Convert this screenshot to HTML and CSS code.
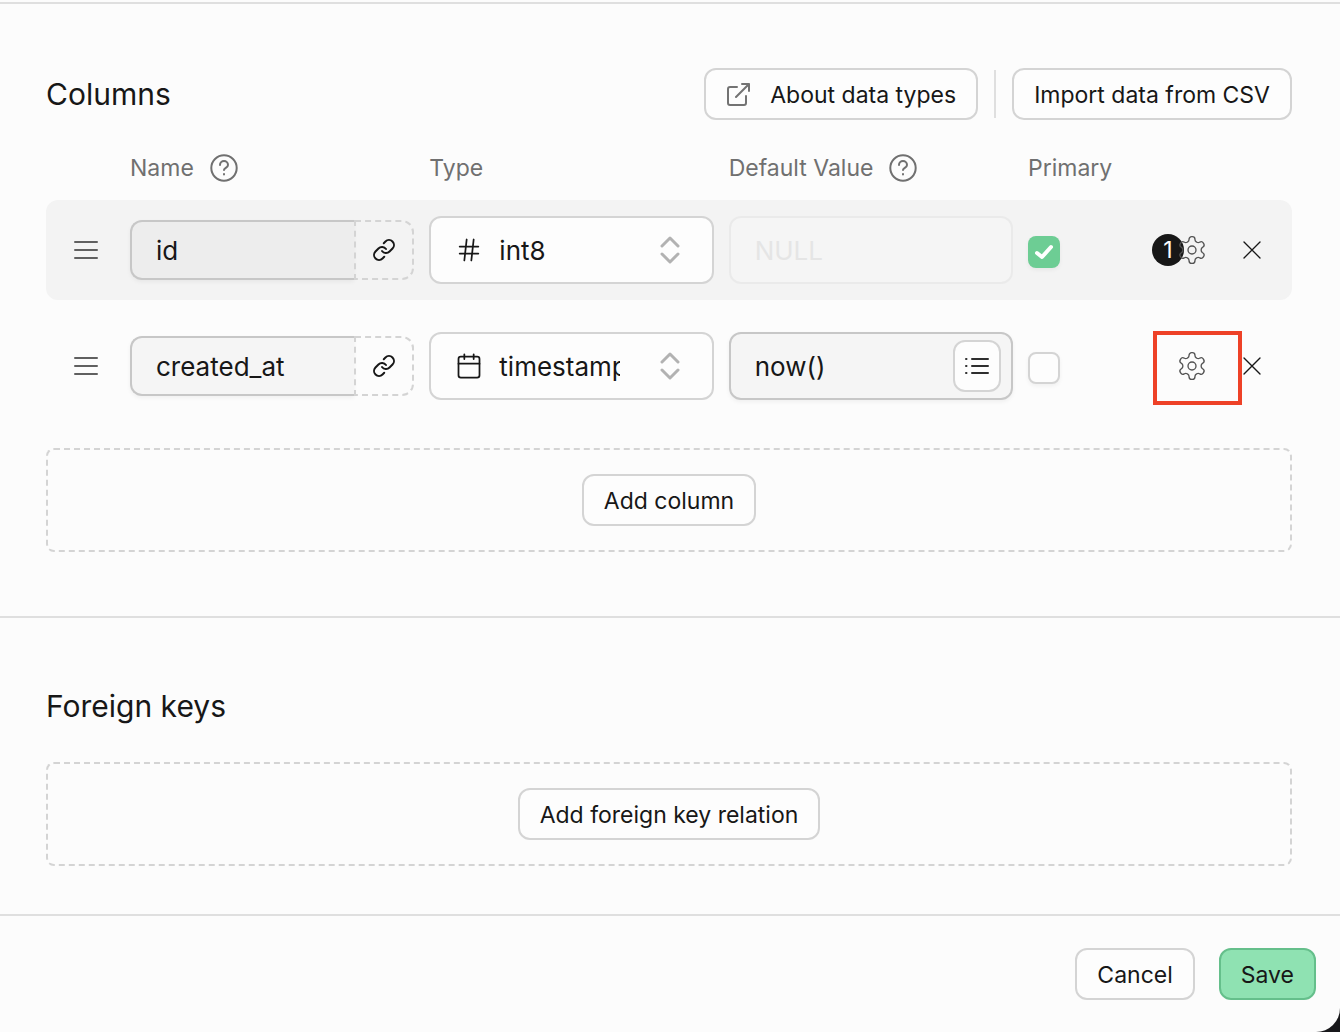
FILE: index.html
```html
<!DOCTYPE html>
<html lang="en">
<head>
    <meta charset="UTF-8">
    <meta name="viewport" content="width=device-width, initial-scale=1.0">
    <title>Table editor</title>
    <link rel="stylesheet" href="styles.css">
</head>
<body>
    <!-- shared icons -->
    <svg class="sprite" aria-hidden="true">
        <symbol id="menu" viewBox="0 0 24 24">
            <path d="M1 4h22M1 12h22M1 20h22"/>
        </symbol>
        <symbol id="help" viewBox="0 0 28 28">
            <circle cx="14" cy="14" r="12.7"/>
            <path d="M10 11a4 4 0 0 1 8 0c0 2.600-4 3-4 5M14 20v.4"/>
        </symbol>
        <symbol id="link" viewBox="0 0 24 24">
            <path d="M10 13a5 5 0 0 0 7.54.54l3-3a5 5 0 0 0-7.07-7.07l-1.72 1.71"/>
            <path d="M14 11a5 5 0 0 0-7.54-.54l-3 3a5 5 0 0 0 7.07 7.07l1.71-1.71"/>
        </symbol>
        <symbol id="chevrons" viewBox="0 0 20 28">
            <path d="M2 10l8-8 8 8M2 18l8 8 8-8"/>
        </symbol>
        <symbol id="gear" viewBox="0 0 24 24">
            <path d="M12.22 2h-.44a2 2 0 0 0-2 2v.18a2 2 0 0 1-1 1.73l-.43.25a2 2 0 0 1-2 0l-.15-.08a2 2 0 0 0-2.73.73l-.22.38a2 2 0 0 0 .73 2.73l.15.1a2 2 0 0 1 1 1.72v.51a2 2 0 0 1-1 1.74l-.15.09a2 2 0 0 0-.73 2.73l.22.38a2 2 0 0 0 2.73.73l.15-.08a2 2 0 0 1 2 0l.43.25a2 2 0 0 1 1 1.73V20a2 2 0 0 0 2 2h.44a2 2 0 0 0 2-2v-.18a2 2 0 0 1 1-1.73l.43-.25a2 2 0 0 1 2 0l.15.08a2 2 0 0 0 2.73-.73l.22-.39a2 2 0 0 0-.73-2.73l-.15-.08a2 2 0 0 1-1-1.74v-.5a2 2 0 0 1 1-1.74l.15-.09a2 2 0 0 0 .73-2.73l-.22-.38a2 2 0 0 0-2.73-.73l-.15.08a2 2 0 0 1-2 0l-.43-.25a2 2 0 0 1-1-1.73V4a2 2 0 0 0-2-2z"/>
            <circle cx="12" cy="12" r="3"/>
        </symbol>
        <symbol id="close" viewBox="0 0 24 24">
            <path d="M18 6L6 18M6 6l12 12"/>
        </symbol>
    </svg>

    <div class="panel">
        <section class="section">
            <div class="section-head">
                <h2>Columns</h2>
                <div class="actions">
                    <a class="btn btn-icon" href="#types">
                        <svg class="icon-ext" viewBox="0 0 24 24"><path d="M11 4H4a2 2 0 0 0-2 2v14a2 2 0 0 0 2 2h14a2 2 0 0 0 2-2v-7M16 1h7v7M23 1L10 14"/></svg>
                        About data types
                    </a>
                    <div class="divider"></div>
                    <button class="btn" type="button">Import data from CSV</button>
                </div>
            </div>

            <div class="grid labels">
                <span></span>
                <span class="label">Name <svg class="icon-help"><use href="#help"/></svg></span>
                <span class="label">Type</span>
                <span class="label">Default Value <svg class="icon-help"><use href="#help"/></svg></span>
                <span class="label">Primary</span>
            </div>

            <div class="grid row row-key">
                <svg class="icon-menu"><use href="#menu"/></svg>
                <div class="name">
                    <input type="text" value="id" aria-label="Column name">
                    <button class="link" type="button" aria-label="Add foreign key"><svg><use href="#link"/></svg></button>
                </div>
                <div class="type">
                    <svg class="icon-type" viewBox="0 0 24 24"><path d="M4 9h16M4 15h16M10 3L8 21M16 3l-2 18"/></svg>
                    <select aria-label="Column type"><option>int8</option></select>
                    <svg class="icon-chevrons"><use href="#chevrons"/></svg>
                </div>
                <div class="default">
                    <input type="text" placeholder="NULL" aria-label="Default value" disabled>
                </div>
                <input class="check" type="checkbox" aria-label="Primary" checked>
                <div class="settings">
                    <span class="badge">1</span>
                    <button class="icon-btn gear" type="button" aria-label="Settings"><svg><use href="#gear"/></svg></button>
                </div>
                <button class="icon-btn" type="button" aria-label="Remove column"><svg><use href="#close"/></svg></button>
            </div>

            <div class="grid row">
                <svg class="icon-menu"><use href="#menu"/></svg>
                <div class="name">
                    <input type="text" value="created_at" aria-label="Column name">
                    <button class="link" type="button" aria-label="Add foreign key"><svg><use href="#link"/></svg></button>
                </div>
                <div class="type">
                    <svg class="icon-type" viewBox="0 0 24 24"><rect x="3" y="4" width="18" height="18" rx="2"/><path d="M3 10h18M8 2v4M16 2v4"/></svg>
                    <select aria-label="Column type"><option>timestamptz</option></select>
                    <svg class="icon-chevrons"><use href="#chevrons"/></svg>
                </div>
                <div class="default">
                    <input type="text" value="now()" aria-label="Default value">
                    <button class="suggest" type="button" aria-label="Suggestions"><svg viewBox="0 0 24 24"><path d="M7 5h16M7 12h16M7 19h16M1 5h.5M1 12h.5M1 19h.5"/></svg></button>
                </div>
                <input class="check" type="checkbox" aria-label="Primary">
                <div class="settings highlight">
                    <button class="icon-btn gear" type="button" aria-label="Settings"><svg><use href="#gear"/></svg></button>
                </div>
                <button class="icon-btn" type="button" aria-label="Remove column"><svg><use href="#close"/></svg></button>
            </div>

            <div class="add-box">
                <button class="btn" type="button">Add column</button>
            </div>
        </section>

        <section class="section section-keys">
            <h2>Foreign keys</h2>
            <div class="add-box">
                <button class="btn" type="button">Add foreign key relation</button>
            </div>
        </section>

        <footer class="footer">
            <button class="btn" type="button">Cancel</button>
            <button class="btn btn-save" type="submit">Save</button>
        </footer>
    </div>
</body>
</html>
```
FILE: styles.css
```css
* {
    box-sizing: border-box;
    margin: 0;
    padding: 0;
}
body {
    background-color: #18181b;
    color: #171717;
    font-family: Inter, "Liberation Sans", sans-serif;
    font-size: 26px;
    line-height: 32px;
}
button, input, select {
    font: inherit;
    color: inherit;
}
svg {
    display: block;
    flex: none;
    fill: none;
    stroke: currentColor;
    stroke-linecap: round;
    stroke-linejoin: round;
}
.sprite {
    position: absolute;
    width: 0;
    height: 0;
}
.panel {
    min-height: 100vh;
    padding-top: 2px;
    background-color: #fcfcfc;
    border-bottom-right-radius: 24px;
}
.section {
    padding: 64px 48px 64px 46px;
    border-top: 2px solid #dfdfdf;
}
.section-keys {
    padding-bottom: 48px;
}
.section-head {
    display: flex;
    justify-content: space-between;
    align-items: center;
}
h2 {
    font-size: 30px;
    font-weight: 400;
    line-height: 48px;
}
.actions {
    display: flex;
    align-items: center;
    gap: 16px;
}
.divider {
    width: 2px;
    height: 48px;
    background-color: #dfdfdf;
}
.btn {
    display: flex;
    align-items: center;
    height: 52px;
    padding: 2px 20px 0;
    background-color: #fdfdfd;
    border: 2px solid #d4d4d4;
    border-radius: 12px;
    color: #171717;
    font-size: 23px;
    text-decoration: none;
    white-space: nowrap;
}
.btn-icon {
    gap: 20px;
}
.btn-save {
    background-color: #8fe2b2;
    border-color: #65bf8b;
}
.icon-ext {
    width: 24px;
    height: 24px;
    stroke: #737373;
    stroke-width: 2;
}

/* column rows */
.grid {
    display: grid;
    grid-template-columns: 84px repeat(3, minmax(0, 1fr)) 124px 84px 56px;
    align-items: center;
}
.labels {
    margin: 32px 0 16px;
    color: #707070;
}
.label {
    display: flex;
    align-items: center;
    gap: 16px;
    font-size: 23px;
}
.icon-help {
    width: 28px;
    height: 28px;
    stroke-width: 2;
}
.row {
    height: 100px;
    margin-bottom: 16px;
    border-radius: 12px;
}
.row-key {
    background-color: #f3f3f3;
}
.icon-menu {
    width: 24px;
    height: 24px;
    margin-left: 28px;
    stroke: #606060;
    stroke-width: 2;
}
.name, .type, .default {
    position: relative;
    display: flex;
    margin-right: 15px;
}
.name input {
    flex: 1;
    min-width: 0;
    height: 60px;
    padding: 0 24px;
    background-color: #f5f5f5;
    border: 2px solid #c7c7c7;
    border-right: 0;
    border-radius: 12px 0 0 12px;
    box-shadow: 0 2px 4px rgba(0, 0, 0, 0.05);
}
.row-key .name input {
    background-color: #ededed;
}
.link {
    display: flex;
    justify-content: center;
    align-items: center;
    width: 60px;
    height: 60px;
    background: none;
    border: 2px dashed #d4d4d4;
    border-radius: 0 12px 12px 0;
}
.link svg {
    width: 24px;
    height: 24px;
    stroke-width: 2;
}
.type select {
    appearance: none;
    width: 100%;
    height: 68px;
    padding: 2px 92px 0 68px;
    background-color: #fdfdfd;
    border: 2px solid #d4d4d4;
    border-radius: 12px;
}
.icon-type, .icon-chevrons {
    position: absolute;
    top: 20px;
    pointer-events: none;
}
.icon-type {
    left: 26px;
    width: 28px;
    height: 28px;
    stroke-width: 1.5;
}
.icon-chevrons {
    right: 34px;
    width: 20px;
    height: 28px;
    stroke: #b2b2b2;
    stroke-width: 3;
}
.default input {
    width: 100%;
    height: 68px;
    padding: 0 60px 0 24px;
    background-color: #f5f5f5;
    border: 2px solid #c7c7c7;
    border-radius: 12px;
    box-shadow: 0 2px 4px rgba(0, 0, 0, 0.05);
}
.default input:disabled {
    border-color: #eaeaea;
    box-shadow: none;
}
.default input::placeholder {
    color: #e5e5e5;
}
.suggest {
    position: absolute;
    top: 8px;
    right: 12px;
    display: flex;
    justify-content: center;
    align-items: center;
    width: 48px;
    height: 52px;
    background-color: #fdfdfd;
    border: 2px solid #d4d4d4;
    border-radius: 12px;
}
.suggest svg {
    width: 24px;
    height: 24px;
    stroke: #2e2e2e;
    stroke-width: 2;
}
.check {
    appearance: none;
    width: 32px;
    height: 32px;
    margin-top: 4px;
    background-color: #fdfdfd;
    border: 2px solid #d4d4d4;
    border-radius: 8px;
    box-shadow: 0 2px 4px rgba(0, 0, 0, 0.05);
}
.check:checked {
    background: #6dcd94 url("data:image/svg+xml,%3Csvg xmlns='http://www.w3.org/2000/svg' viewBox='0 0 32 32' fill='none' stroke='white' stroke-width='4' stroke-linecap='round' stroke-linejoin='round'%3E%3Cpath d='M9 17l5 4 9-10'/%3E%3C/svg%3E") center / 32px;
    border: 0;
}
.settings {
    position: relative;
    display: flex;
    align-items: center;
    width: 56px;
}
.badge {
    width: 32px;
    height: 32px;
    background-color: #171717;
    border-radius: 50%;
    color: #fcfcfc;
    font-size: 23px;
    text-align: center;
}
.icon-btn {
    width: 32px;
    height: 32px;
    background: none;
    border: 0;
}
.icon-btn svg {
    width: 32px;
    height: 32px;
    stroke-width: 1;
}
.gear {
    margin-left: auto;
}
.badge + .gear {
    margin-left: -8px;
}
.gear svg {
    stroke: #525252;
}
/* red frame around the settings button */
.highlight::after {
    content: "";
    position: absolute;
    top: -19px;
    left: 1px;
    box-sizing: border-box;
    width: 89px;
    height: 74px;
    border: 4px solid #ee4127;
    pointer-events: none;
}

.add-box {
    display: flex;
    justify-content: center;
    margin-top: 32px;
    padding: 24px;
    border: 2px dashed #d4d4d4;
    border-radius: 8px;
}
.footer {
    display: flex;
    justify-content: flex-end;
    gap: 24px;
    padding: 32px 24px;
    border-top: 2px solid #dfdfdf;
}
```
